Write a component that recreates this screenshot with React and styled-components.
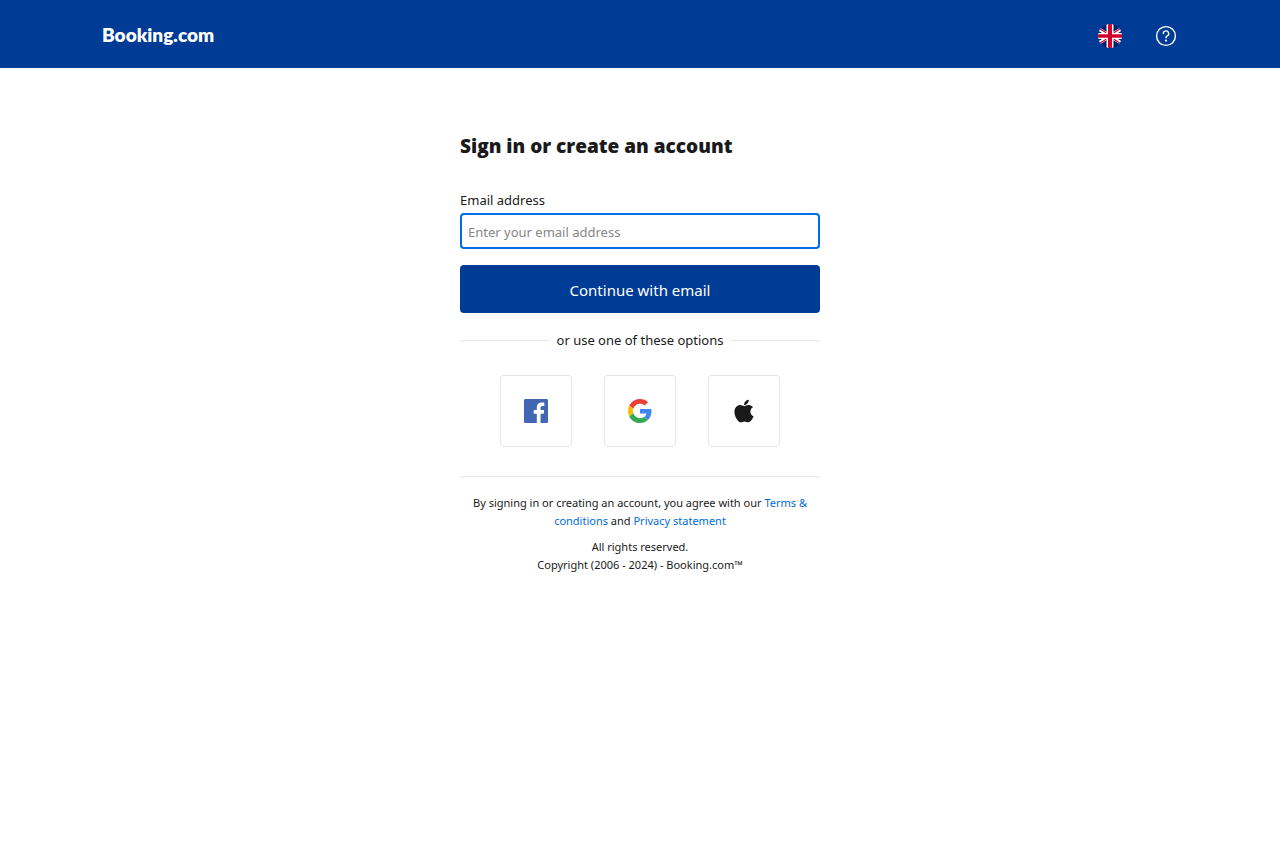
import React from "react";
import styled, { createGlobalStyle } from "styled-components";
import { FaApple } from "react-icons/fa";

const GlobalStyle = createGlobalStyle`
  *, *::before, *::after { box-sizing: border-box; }
  body {
    margin: 0;
    background: #fff;
    color: #1a1a1a;
    font-family: "Noto Sans", sans-serif;
    font-size: 13px;
    line-height: 20px;
  }
`;

const Header = styled.header`
  background: #003b95;
`;

const HeaderInner = styled.div`
  display: flex;
  align-items: center;
  justify-content: space-between;
  max-width: 1100px;
  min-height: 68px;
  margin: 0 auto;
  padding: 4px 12px 0;
`;

const Logo = styled.a`
  padding-bottom: 2px;
  color: #fff;
  font-family: Lato, sans-serif;
  font-size: 19px;
  font-weight: 800;
  line-height: 24px;
  text-decoration: none;
`;

const HeaderActions = styled.nav`
  display: flex;
  gap: 32px;
`;

const IconButton = styled.button`
  display: flex;
  padding: 0;
  border: 0;
  background: none;
  color: #fff;
  cursor: pointer;
`;

const Panel = styled.main`
  max-width: 376px;
  margin: 0 auto;
  padding: 64px 8px;
`;

const Title = styled.h1`
  margin: 0 0 28px;
  font-family: "Open Sans", sans-serif;
  font-size: 19px;
  font-weight: 800;
  line-height: 28px;
`;

const Label = styled.label`
  display: block;
  margin-bottom: 1px;
  font-size: 13px;
  line-height: 24px;
`;

const EmailInput = styled.input`
  display: block;
  width: 100%;
  height: 36px;
  padding: 2px 6px 0;
  border: 2px solid #006ce4;
  border-radius: 4px;
  outline: 0;
  background: #fff;
  color: #1a1a1a;
  font-family: inherit;
  font-size: 13px;
  &::placeholder { color: #868686; opacity: 1; }
`;

const SubmitButton = styled.button`
  display: block;
  width: 100%;
  height: 48px;
  margin-top: 16px;
  padding: 2px 16px 0;
  border: 0;
  border-radius: 4px;
  background: #003b95;
  color: #fff;
  font-family: inherit;
  font-size: 15px;
  cursor: pointer;
`;

const Divider = styled.div`
  display: flex;
  align-items: center;
  gap: 8px;
  margin-top: 16px;
  font-size: 13px;
  line-height: 22px;
  &::before, &::after {
    content: "";
    flex: 1;
    height: 1px;
    background: #e7e7e7;
  }
`;

const SocialList = styled.div`
  display: flex;
  justify-content: center;
  gap: 32px;
  margin-top: 24px;
`;

const SocialButton = styled.button`
  display: flex;
  align-items: center;
  justify-content: center;
  width: 72px;
  height: 72px;
  padding: 0;
  border: 1px solid #e7e7e7;
  border-radius: 4px;
  background: #fff;
  color: #1a1a1a;
  cursor: pointer;
`;

const Legal = styled.footer`
  margin-top: 29px;
  padding-top: 17px;
  border-top: 1px solid #e7e7e7;
  font-size: 11px;
  line-height: 18px;
  text-align: center;
`;

const LegalText = styled.p`
  margin: 0 0 8px;
`;

const LegalLink = styled.a`
  color: #006ce4;
  text-decoration: none;
`;

const FlagIcon = () => (
  <svg width="24" height="24" viewBox="0 0 24 24" aria-hidden="true">
    <defs>
      <clipPath id="flag-circle"><circle cx="12" cy="12" r="12" /></clipPath>
    </defs>
    <g clipPath="url(#flag-circle)">
      <path fill="#012169" d="M0 0h24v24H0z" />
      <path stroke="#fff" strokeWidth="3.4" d="M-4 2l32 20M-4 22L28 2" />
      <path stroke="#d1002c" strokeWidth="1.1" d="M-4 1.2l16 10M12 12.8l16 10M-4 22.8l16-10M12 11.2l16-10" />
      <path fill="#fff" d="M8.5 0h7v9H24v6h-8.5v9h-7v-9H0V9h8.500z" />
      <path fill="#d1002c" d="M10 0h4v10.200h10v3.600H14V24h-4V13.800H0v-3.600h10z" />
    </g>
  </svg>
);

const HelpIcon = () => (
  <svg width="24" height="24" viewBox="0 0 24 24" fill="none" stroke="currentColor" strokeWidth="1.4" strokeLinecap="round" strokeLinejoin="round" aria-hidden="true">
    <circle cx="12" cy="12" r="9.4" />
    <path d="M9.3 9.6a2.7 2.7 0 1 1 4 2.35c-.85.5-1.3 1-1.3 1.8" />
    <circle cx="12" cy="16.6" r="1.1" fill="currentColor" stroke="none" />
  </svg>
);

const FacebookIcon = () => (
  <svg width="24" height="24" viewBox="0 0 24 24" aria-hidden="true">
    <path fill="#4267b2" d="M22.68 0H1.32C.59 0 0 .59 0 1.32v21.36C0 23.41.59 24 1.32 24h11.5v-9.29H9.69v-3.62h3.13V8.41c0-3.1 1.89-4.79 4.66-4.79 1.33 0 2.47.1 2.8.14v3.24h-1.92c-1.5 0-1.8.72-1.8 1.77v2.32h3.6l-.47 3.62h-3.13V24h6.12c.73 0 1.32-.59 1.32-1.32V1.32C24 .59 23.41 0 22.68 0z" />
  </svg>
);

const GoogleIcon = () => (
  <svg width="24" height="24" viewBox="0 0 48 48" aria-hidden="true">
    <path fill="#ea4335" d="M24 9.5c3.54 0 6.71 1.22 9.21 3.6l6.85-6.85C35.9 2.38 30.47 0 24 0 14.62 0 6.51 5.38 2.56 13.22l7.98 6.19C12.43 13.72 17.74 9.5 24 9.5z" />
    <path fill="#4285f4" d="M46.98 24.55c0-1.57-.15-3.09-.38-4.55H24v9.02h12.94c-.58 2.96-2.26 5.48-4.78 7.18l7.73 6c4.51-4.18 7.09-10.36 7.09-17.65z" />
    <path fill="#fbbc05" d="M10.53 28.59c-.48-1.45-.76-2.99-.76-4.59s.27-3.14.76-4.59l-7.98-6.19C.92 16.46 0 20.12 0 24c0 3.88.92 7.54 2.56 10.78l7.97-6.19z" />
    <path fill="#34a853" d="M24 48c6.48 0 11.93-2.13 15.89-5.81l-7.73-6c-2.15 1.45-4.92 2.3-8.16 2.3-6.26 0-11.57-4.22-13.47-9.91l-7.98 6.19C6.51 42.62 14.62 48 24 48z" />
  </svg>
);

export default function App() {
  return (
    <>
      <GlobalStyle />
      <Header>
        <HeaderInner>
          <Logo href="#">Booking.com</Logo>
          <HeaderActions>
            <IconButton type="button" aria-label="Select your language"><FlagIcon /></IconButton>
            <IconButton type="button" aria-label="Help"><HelpIcon /></IconButton>
          </HeaderActions>
        </HeaderInner>
      </Header>
      <Panel>
        <Title>Sign in or create an account</Title>
        <form onSubmit={(event) => event.preventDefault()}>
          <Label htmlFor="email">Email address</Label>
          <EmailInput id="email" type="email" placeholder="Enter your email address" />
          <SubmitButton type="submit">Continue with email</SubmitButton>
        </form>
        <Divider>or use one of these options</Divider>
        <SocialList>
          <SocialButton type="button" aria-label="Sign in with Facebook"><FacebookIcon /></SocialButton>
          <SocialButton type="button" aria-label="Sign in with Google"><GoogleIcon /></SocialButton>
          <SocialButton type="button" aria-label="Sign in with Apple"><FaApple size={26} /></SocialButton>
        </SocialList>
        <Legal>
          <LegalText>
            By signing in or creating an account, you agree with our <LegalLink href="#">Terms &amp; conditions</LegalLink> and <LegalLink href="#">Privacy statement</LegalLink>
          </LegalText>
          <LegalText>
            All rights reserved.<br />Copyright (2006 - 2024) - Booking.com™
          </LegalText>
        </Legal>
      </Panel>
    </>
  );
}
